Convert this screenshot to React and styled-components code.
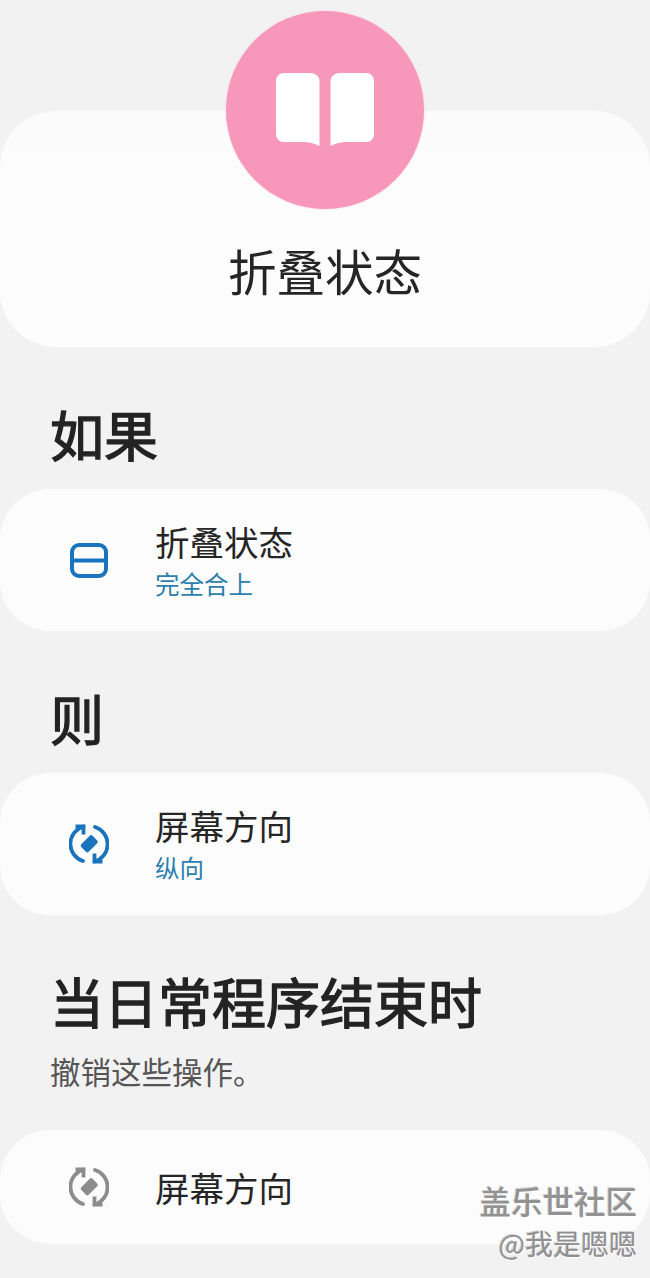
import React from "react";
import styled, { createGlobalStyle } from "styled-components";

const Global = createGlobalStyle`
  html, body { margin: 0; padding: 0; background: #f2f2f2; }
  * { box-sizing: border-box; }
`;
const Page = styled.div`
  width: 650px; height: 1278px; overflow: hidden; position: relative;
  background: #f2f2f2; padding-top: 111px;
  font-family: "Noto Sans CJK SC", "Noto Sans", sans-serif; color: #252525;
`;
const Hero = styled.section`
  position: relative; height: 236px; border-radius: 56px;
  background: linear-gradient(#fbfbfb, #fdfdfd);
  display: flex; justify-content: center; padding-top: 125px;
`;
const Badge = styled.div`
  position: absolute; left: 226px; top: -100px; width: 198px; height: 198px; border-radius: 50%;
  background: #f797ba; display: flex; align-items: center; justify-content: center;
  box-shadow: 0 0 2px #f8c8da;
`;
const HeroTitle = styled.h1`
  margin: 0; font-weight: 400; font-size: 48.5px; line-height: 68px;
`;
const Heading = styled.h2`
  margin: ${p => p.$top}px 0 0 50px; font-weight: 400; font-size: 54px;
  line-height: 72px; color: #232323; -webkit-text-stroke: 1.3px #232323;
`;
const Note = styled.p`
  margin: 13px 0 0 50px; font-size: 30.5px; line-height: 42px; color: #555;
`;
const Row = styled.div`
  height: ${p => p.$h}px; margin-top: ${p => p.$top}px; border-radius: 50px; background: #fcfcfc;
  display: flex; align-items: center; padding-left: 68px; gap: 45px;
`;
const IconWrap = styled.div`
  width: 42px; height: 42px; display: flex; align-items: center; justify-content: center; flex: none;
  color: ${p => p.$color};
`;
const Texts = styled.div`display: flex; flex-direction: column; padding-bottom: 1px;`;
const RowTitle = styled.div`font-size: 34.5px; line-height: 46px;`;
const RowSub = styled.div`font-size: 24.5px; line-height: 34px; color: #2c7fae; margin-top: 3px;`;
const Watermark = styled.div`
  position: absolute; right: 13px; top: 1179px; text-align: right; color: #929292;
  text-shadow: 1px 1px 0 #fff, -1px -1px 0 #6f6f6f55;
`;
const MarkBig = styled.div`font-size: 31.5px; line-height: 42px; font-weight: 500;`;
const MarkSmall = styled.div`font-size: 28px; line-height: 44px; color: #8f8f8f; font-weight: 400;`;

const BookIcon = () => (
  <svg width="98" height="74" viewBox="0 0 98 74" fill="#fff">
    <path d="M8 0H34C39 0 43.500 3 43.500 8V73C38 70.500 33 69 27 69H8C3.500 69 0 65.500 0 61V8C0 3.500 3.500 0 8 0Z" />
    <path d="M90 0H64C59 0 54.500 3 54.500 8V73C60 70.500 65 69 71 69H90C94.500 69 98 65.500 98 61V8C98 3.500 94.500 0 90 0Z" />
  </svg>
);
const FoldIcon = () => (
  <svg width="38" height="35" viewBox="0 0 38 35" fill="none" stroke="currentColor" strokeWidth="4">
    <rect x="2" y="2" width="34" height="31" rx="7" />
    <path d="M2 17.500H36" />
  </svg>
);
const RotateIcon = () => (
  <svg width="40" height="40" viewBox="0 0 40 40" fill="none" stroke="currentColor" strokeWidth="3.800">
    <path d="M14 37A18 18 0 0 1 14.500 2.500" strokeLinecap="round" />
    <path d="M26 3A18 18 0 0 1 25.500 37.500" strokeLinecap="round" />
    <path d="M6.500 2.500H14.500V10.500" />
    <path d="M33.500 37.500H25.500V29.500" />
    <rect x="15" y="11.700" width="10.500" height="16" rx="2" fill="currentColor" stroke="none" transform="rotate(45 20.200 19.700)" />
  </svg>
);

export default function App() {
  return (
    <Page>
      <Global />
      <Hero>
        <Badge><BookIcon /></Badge>
        <HeroTitle>折叠状态</HeroTitle>
      </Hero>
      <Heading $top={51}>如果</Heading>
      <Row $h={142} $top={19}>
        <IconWrap $color="#1a74bd"><FoldIcon /></IconWrap>
        <Texts><RowTitle>折叠状态</RowTitle><RowSub>完全合上</RowSub></Texts>
      </Row>
      <Heading $top={51}>则</Heading>
      <Row $h={142} $top={19}>
        <IconWrap $color="#1a74bd"><RotateIcon /></IconWrap>
        <Texts><RowTitle>屏幕方向</RowTitle><RowSub>纵向</RowSub></Texts>
      </Row>
      <Heading $top={50}>当日常程序结束时</Heading>
      <Note>撤销这些操作。</Note>
      <Row $h={114} $top={38}>
        <IconWrap $color="#8c8c8c"><RotateIcon /></IconWrap>
        <Texts><RowTitle>屏幕方向</RowTitle></Texts>
      </Row>
      <Watermark>
        <MarkBig>盖乐世社区</MarkBig>
        <MarkSmall>@我是嗯嗯</MarkSmall>
      </Watermark>
    </Page>
  );
}
